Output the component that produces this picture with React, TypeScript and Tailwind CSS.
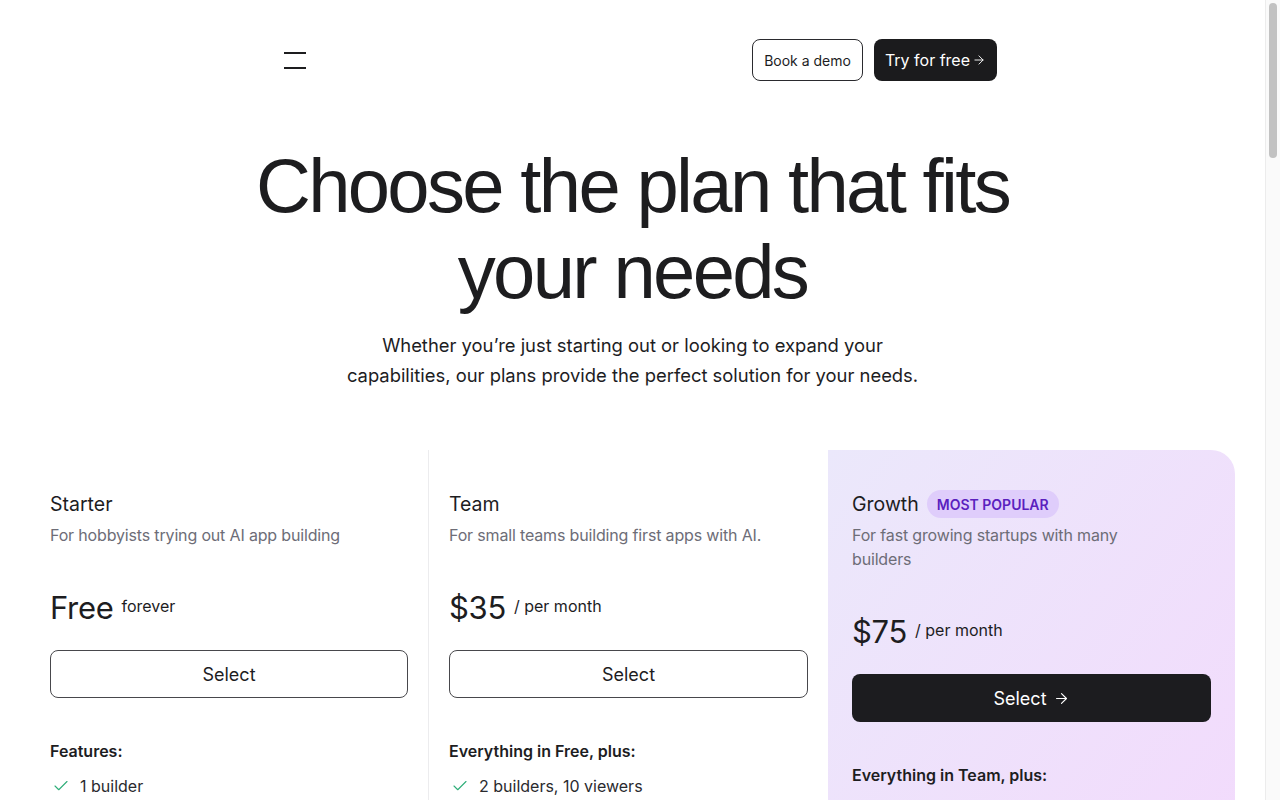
import { Check, ArrowRight } from "lucide-react";

interface Plan {
  name: string;
  description: string;
  price: string;
  priceNote: string;
  featuresTitle: string;
  features: string[];
  popular?: boolean;
}

const plans: Plan[] = [
  {
    name: "Starter",
    description: "For hobbyists trying out AI app building",
    price: "Free",
    priceNote: "forever",
    featuresTitle: "Features:",
    features: ["1 builder", "Unlimited apps", "Community support", "Basic integrations"],
  },
  {
    name: "Team",
    description: "For small teams building first apps with AI.",
    price: "$35",
    priceNote: "/ per month",
    featuresTitle: "Everything in Free, plus:",
    features: ["2 builders, 10 viewers", "Custom domains", "Email support", "Version history"],
  },
  {
    name: "Growth",
    description: "For fast growing startups with many builders",
    price: "$75",
    priceNote: "/ per month",
    featuresTitle: "Everything in Team, plus:",
    features: ["5 builders, 50 viewers", "SSO", "Priority support", "Advanced analytics"],
    popular: true,
  },
];

function PlanColumn({ plan, className }: { plan: Plan; className: string }) {
  return (
    <div className={className}>
      <div className="flex items-center gap-2 h-7">
        <span className="text-[19.5px] leading-7 text-[#1d1d1f]">{plan.name}</span>
        {plan.popular && (
          <span className="h-7 px-2.5 rounded-full bg-[#dfcdfb] text-[#5b1fbf] text-[14px] font-semibold flex items-center">
            MOST POPULAR
          </span>
        )}
      </div>
      <p
        className={
          "mt-[5px] text-[16px] leading-6 text-[#6d6d77] tracking-[-0.01em] " +
          (plan.popular ? "max-w-[290px]" : "")
        }
      >
        {plan.description}
      </p>

      <div className="mt-[41px] flex items-center gap-2 h-10">
        <span className="text-[31px] leading-10 text-[#1d1d1f] tracking-[-0.01em]">{plan.price}</span>
        <span className="text-[16px] text-[#1d1d1f] -mt-1">{plan.priceNote}</span>
      </div>

      {plan.popular ? (
        <button className="mt-[22px] w-full h-12 rounded-lg bg-[#1c1c1f] text-white text-[18px] flex items-center justify-center gap-1.5">
          Select <ArrowRight size={17} strokeWidth={1.6} />
        </button>
      ) : (
        <button className="mt-[22px] w-full h-12 rounded-lg border border-[#48484c] text-[#1d1d1f] text-[18px]">
          Select
        </button>
      )}

      <p className="mt-[41px] text-[16px] leading-6 font-semibold text-[#1d1d1f]">{plan.featuresTitle}</p>
      <ul className="mt-[11px] space-y-3">
        {plan.features.map((f) => (
          <li key={f} className="flex items-center gap-2.5 text-[16px] leading-6 text-[#2a2a2e]">
            <Check size={18} strokeWidth={1.5} className="text-[#2fae79] ml-[2px]" />
            {f}
          </li>
        ))}
      </ul>
    </div>
  );
}

export default function App() {
  return (
    <div
      className="h-screen flex overflow-hidden bg-white text-[#1d1d1f]"
      style={{ fontFamily: "Inter, 'Noto Sans', sans-serif" }}
    >
      <main className="w-[1265px] shrink-0 overflow-hidden">
        <header className="pt-[39px] ml-[284px] w-[713px] flex items-center justify-between">
          <button className="w-[22px] h-[42px] flex flex-col justify-center gap-[13px]">
            <span className="block h-[2px] w-[22px] bg-[#1d1d1f]" />
            <span className="block h-[2px] w-[22px] bg-[#1d1d1f]" />
          </button>
          <div className="flex items-center gap-[11px]">
            <button className="h-[42px] px-[11px] rounded-lg border border-[#2a2a2e] text-[14px] text-[#1d1d1f]">
              Book a demo
            </button>
            <button className="h-[42px] px-[11px] rounded-lg bg-[#1b1b1d] text-white text-[16px] flex items-center gap-0.5">
              Try for free <ArrowRight size={14} strokeWidth={1.6} />
            </button>
          </div>
        </header>

        <h1
          className="mt-[62px] text-center text-[76px] leading-[86px] tracking-[-0.035em] text-[#1d1d1f]"
          style={{ fontFamily: "'Liberation Sans', Arial, sans-serif" }}
        >
          Choose the plan that fits
          <br />
          your needs
        </h1>
        <p className="mt-[15px] text-center text-[18.4px] leading-[30px] text-[#1d1d1f]">
          Whether you’re just starting out or looking to expand your
          <br />
          capabilities, our plans provide the perfect solution for your needs.
        </p>

        <section className="mt-[60px] mx-[30px] grid grid-cols-[399px_399px_1fr]">
          <PlanColumn plan={plans[0]} className="px-5 pt-10 pb-10 border-r border-[#ececee]" />
          <PlanColumn plan={plans[1]} className="px-5 pt-10 pb-10" />
          <PlanColumn
            plan={plans[2]}
            className="px-6 pt-10 pb-10 rounded-tr-3xl bg-gradient-to-br from-[#ebe8fb] to-[#f3d9fc]"
          />
        </section>
      </main>

      <aside className="w-[15px] shrink-0 bg-[#fafafa] border-l border-[#ececec] pt-[3px] flex justify-center">
        <div className="w-[8px] h-[155px] rounded-full bg-[#c2c2c2]" />
      </aside>
    </div>
  );
}
